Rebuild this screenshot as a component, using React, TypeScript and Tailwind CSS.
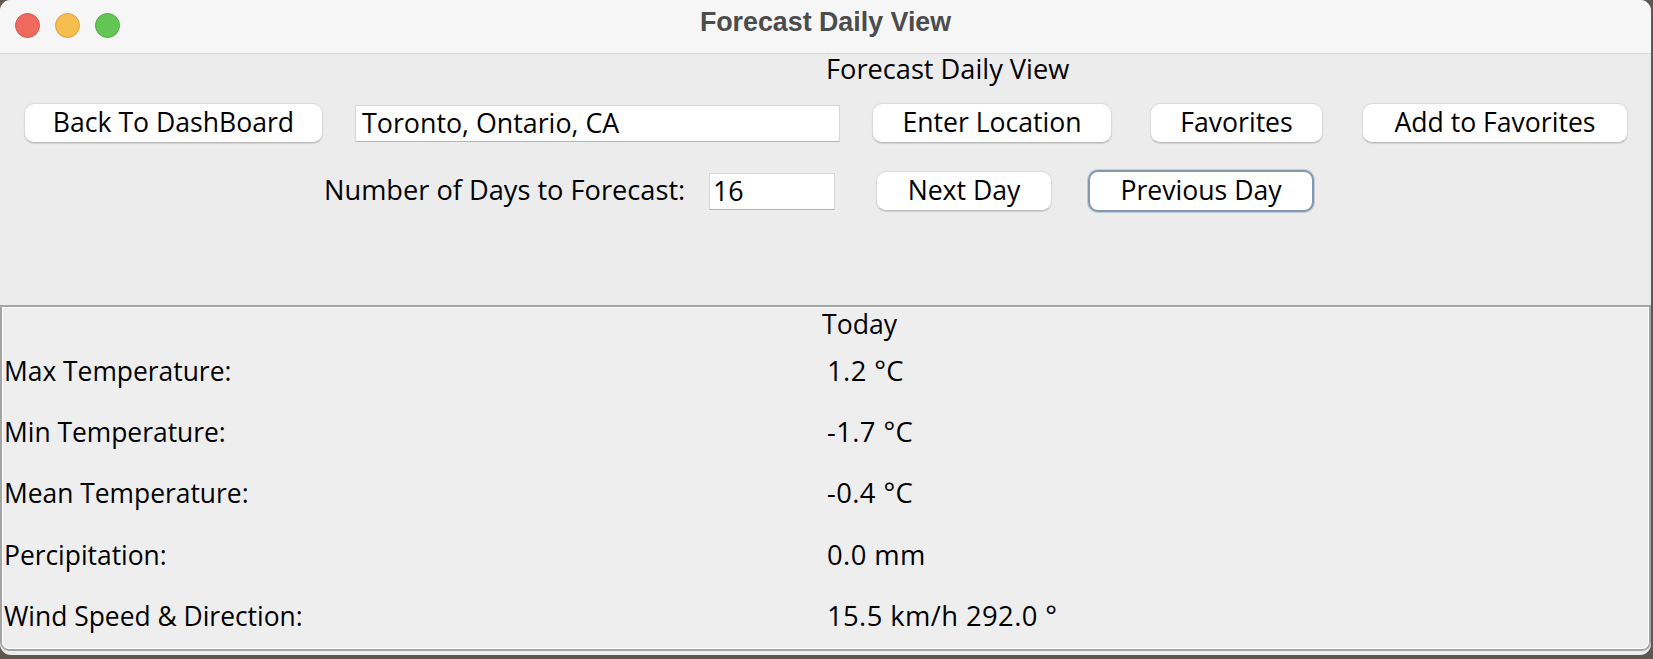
const body = { fontFamily: '"Open Sans", "DejaVu Sans", sans-serif' };

const Btn = ({ label, w, focus }: { label: string; w: string; focus?: boolean }) => (
  <div
    className={`${w} ${
      focus
        ? "h-[42px] border-2 border-[#8797ad] shadow-[0_0_0_1px_#c3ccd9]"
        : "h-[40px] border border-[#dadada] border-b-[#bdbdbd] shadow-[0_1px_1px_rgba(0,0,0,0.12)]"
    } shrink-0 rounded-[10px] bg-white flex items-center justify-center pb-[3px] text-[26.6px] leading-[34px] text-black`}
  >
    {label}
  </div>
);

const Field = ({ value, w, h, pad }: { value: string; w: string; h: string; pad: string }) => (
  <div
    className={`${w} ${h} ${pad} shrink-0 bg-white border border-[#d6d6d6] border-b-[#b5b5b5] flex items-center text-[26.8px] leading-[34px] text-black`}
  >
    {value}
  </div>
);

const rows = [
  ["Max Temperature:", "1.2 °C"],
  ["Min Temperature:", "-1.7 °C"],
  ["Mean Temperature:", "-0.4 °C"],
  ["Percipitation:", "0.0 mm"],
  ["Wind Speed & Direction:", "15.5 km/h 292.0 °"],
];

export default function App() {
  return (
    <div className="w-[1653px] h-[659px] bg-[#5f5750] overflow-hidden">
      <div className="w-[1651px] h-[655px] rounded-[11px] overflow-hidden bg-[#ececec] flex flex-col" style={body}>
        {/* title bar */}
        <div className="h-[54px] shrink-0 bg-[#f6f6f6] border-b border-[#d4d4d4] relative flex justify-center">
          <div className="absolute left-[15px] top-[13px] flex gap-[15px]">
            <div className="w-[25px] h-[25px] rounded-full bg-[#ee6a5f] border border-[#d8574c]" />
            <div className="w-[25px] h-[25px] rounded-full bg-[#f5be4f] border border-[#d9a33b]" />
            <div className="w-[25px] h-[25px] rounded-full bg-[#62c554] border border-[#4fae43]" />
          </div>
          <div
            className="pt-[9px] text-[26.8px] leading-[26px] font-bold text-[#4c4c4c]"
            style={{ fontFamily: '"Liberation Sans", Arial, sans-serif' }}
          >
            Forecast Daily View
          </div>
        </div>

        {/* controls */}
        <div className="h-[251px] shrink-0 flex flex-col">
          <div className="pt-[2px] pl-[826px] h-[28px] text-[27.2px] leading-[26px] text-black">Forecast Daily View</div>

          <div className="mt-[21px] flex items-center pl-[24px] h-[40px]">
            <Btn label="Back To DashBoard" w="w-[299px]" />
            <div className="ml-[32px]">
              <Field value="Toronto, Ontario, CA" w="w-[485px]" h="h-[37px]" pad="pl-[6px]" />
            </div>
            <div className="ml-[32px]">
              <Btn label="Enter Location" w="w-[240px]" />
            </div>
            <div className="ml-[38px]">
              <Btn label="Favorites" w="w-[173px]" />
            </div>
            <div className="ml-[39px]">
              <Btn label="Add to Favorites" w="w-[266px]" />
            </div>
          </div>

          <div className="mt-[27px] flex items-center h-[42px]">
            <div className="w-[709px] pl-[324px] text-[27.2px] leading-[42px] text-black shrink-0 pb-[2px]">
              Number of Days to Forecast:
            </div>
            <Field value="16" w="w-[126px]" h="h-[37px]" pad="pl-[3px]" />
            <div className="ml-[41px]">
              <Btn label="Next Day" w="w-[176px]" />
            </div>
            <div className="ml-[36px]">
              <Btn label="Previous Day" w="w-[226px]" focus />
            </div>
          </div>
        </div>

        {/* daily panel */}
        <div className="h-[346px] shrink-0 border-2 border-[#a4a4a4] rounded-bl-[9px] rounded-br-[9px] bg-[#eeeeee]">
          <div className="h-full border border-white rounded-bl-[7px] rounded-br-[7px] flex flex-col">
            <div className="h-[32px] pl-[819px] text-[26.6px] leading-[32px] text-black">Today</div>
            {rows.map(([k, v]) => (
              <div key={k} className="h-[61.4px] flex items-center text-[26.4px] leading-[32px] text-black">
                <div className="w-[824px] pl-[1px] shrink-0">{k}</div>
                <div className="text-[27.4px] tracking-[0.4px]">{v}</div>
              </div>
            ))}
          </div>
        </div>
      </div>
    </div>
  );
}
